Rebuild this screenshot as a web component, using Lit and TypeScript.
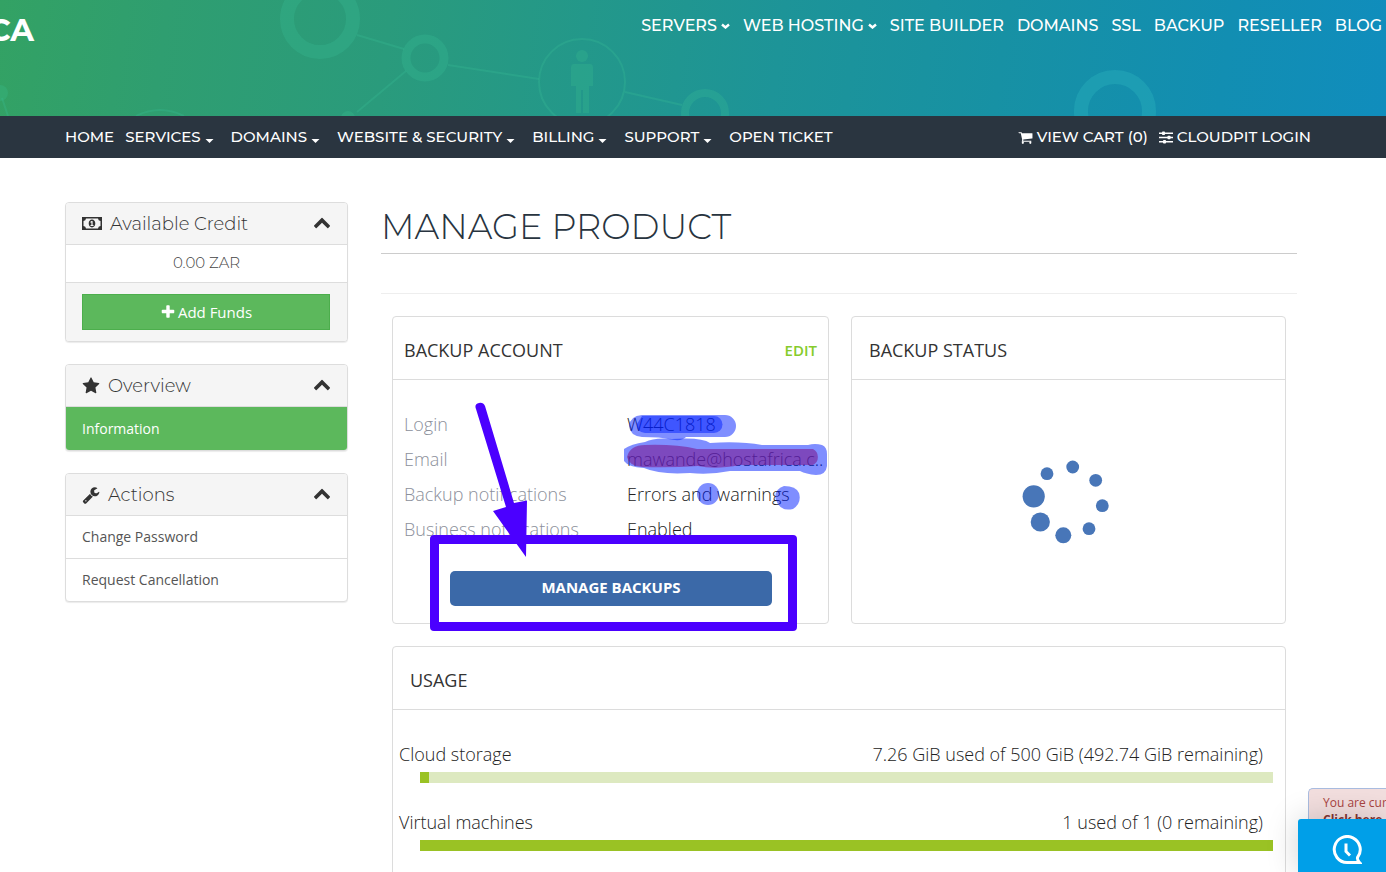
import { LitElement, html, css, svg, nothing } from "lit";
import { customElement, property } from "lit/decorators.js";

const GLYPHS: Record<string, string> = {
  up: "M1683 1331l-166 165q-19 19-45 19t-45-19l-531-531-531 531q-19 19-45 19t-45-19l-166-165q-19-19-19-45.500t19-45.500l742-741q19-19 45-19t45 19l742 741q19 19 19 45.500t-19 45.500z",
  star: "M1728 647q0 22-26 48l-363 354 86 500q1 7 1 20 0 21-10.500 35.500t-30.500 14.500q-19 0-40-12l-449-236-449 236q-22 12-40 12-21 0-31.500-14.500t-10.500-35.500q0-6 2-20l86-500-364-354q-25-27-25-48 0-37 56-46l502-73 225-455q19-41 49-41t49 41l225 455 502 73q56 9 56 46z",
  wrench:
    "M448 1472q0-26-19-45t-45-19-45 19-19 45 19 45 45 19 45-19 19-45zm644-420l-682 682q-37 37-90 37-52 0-91-37l-106-108q-38-36-38-90 0-53 38-91l681-681q39 98 114.500 173.500t173.500 114.500zm634-435q0 39-23 106-47 134-164.500 217.500t-258.500 83.500q-185 0-316.500-131.500t-131.500-316.500 131.500-316.500 316.500-131.500q58 0 121.500 16.500t107.500 46.500q16 11 16 28t-16 28l-293 169v224l193 107q5-3 79-48.500t135.500-81 70.500-35.500q15 0 23.500 10t8.500 25z",
  plus: "M1600 736v192q0 40-28 68t-68 28h-416v416q0 40-28 68t-68 28h-192q-40 0-68-28t-28-68v-416h-416q-40 0-68-28t-28-68v-192q0-40 28-68t68-28h416v-416q0-40 28-68t68-28h192q40 0 68 28t28 68v416h416q40 0 68 28t28 68z",
  cart: "M704 1536q0 52-38 90t-90 38-90-38-38-90 38-90 90-38 90 38 38 90zm896 0q0 52-38 90t-90 38-90-38-38-90 38-90 90-38 90 38 38 90zm128-1088v512q0 24-16.500 42.500t-40.500 21.500l-1044 122q13 60 13 70 0 16-24 64h920q26 0 45 19t19 45-19 45-45 19h-1024q-26 0-45-19t-19-45q0-11 8-31.500t16-36 21.500-40 15.500-29.500l-177-823h-204q-26 0-45-19t-19-45 19-45 45-19h256q16 0 28.500 6.500t19.500 15.500 13 24.500 8 26 5.500 29.500 4.500 26h1201q26 0 45 19t19 45z",
};

const glyph = (name: string, size: number) => html`<svg
  width=${size}
  height=${size}
  viewBox="0 0 1792 1792"
  fill="currentColor"
  aria-hidden="true"
>
  <path d=${GLYPHS[name]}></path>
</svg>`;

const money = html`<svg width="20" height="13" viewBox="0 0 20 13" aria-hidden="true">
  <path
    fill="currentColor"
    fill-rule="evenodd"
    d="M0 0H20V13H0ZM4 1.500A2.700 2.700 0 0 1 1.500 4V9A2.700 2.700 0 0 1 4 11.500H16A2.700 2.700 0 0 1 18.500 9V4A2.700 2.700 0 0 1 16 1.500ZM10 2.600C12 2.600 13.300 4.300 13.300 6.500S12 10.400 10 10.400 6.700 8.700 6.700 6.500 8 2.600 10 2.600ZM9.400 4L8.200 5.100 8.800 5.800 9.400 5.400V8.100H8.500V9H11.500V8.100H10.600V4Z"
  ></path>
</svg>`;

const sliders = html`<svg width="14" height="13" viewBox="0 0 14 13" aria-hidden="true">
  <g fill="currentColor">
    <path d="M0 1.500H14V3H0ZM0 5.700H14V7.200H0ZM0 10H14V11.500H0Z"></path>
    <rect x="3" y="0.500" width="3" height="3.500" rx="0.800"></rect>
    <rect x="8.500" y="4.700" width="3" height="3.500" rx="0.800"></rect>
    <rect x="4" y="9" width="3" height="3.500" rx="0.800"></rect>
  </g>
</svg>`;

@customElement("side-panel")
class SidePanel extends LitElement {
  @property() heading = "";
  @property() icon = "";

  static styles = css`
    :host {
      display: block;
      border: 1px solid #ddd;
      border-radius: 4px;
      background: #fff;
      box-shadow: 0 1px 1px rgba(0, 0, 0, 0.08);
      overflow: hidden;
    }
    .head {
      display: flex;
      align-items: center;
      gap: 8px;
      height: 41px;
      padding: 0 16px;
      border-bottom: 1px solid #ddd;
      background: #f5f5f5;
      color: #333;
    }
    h3 {
      flex: 1;
      margin: 0;
      font: 300 18px/22px Montserrat, Inter, sans-serif;
    }
    button {
      display: flex;
      padding: 0 0 4px;
      border: 0;
      background: none;
      color: #333;
    }
  `;

  render() {
    return html`
      <div class="head">
        ${this.icon === "money" ? money : glyph(this.icon, 18)}
        <h3>${this.heading}</h3>
        <button type="button" aria-label="Toggle ${this.heading}">${glyph("up", 18)}</button>
      </div>
      <slot></slot>
    `;
  }
}

const TOP_LINKS: [string, boolean][] = [
  ["SERVERS", true],
  ["WEB HOSTING", true],
  ["SITE BUILDER", false],
  ["DOMAINS", false],
  ["SSL", false],
  ["BACKUP", false],
  ["RESELLER", false],
  ["BLOG", false],
];

const MAIN_LINKS: [string, boolean][] = [
  ["HOME", false],
  ["SERVICES", true],
  ["DOMAINS", true],
  ["WEBSITE & SECURITY", true],
  ["BILLING", true],
  ["SUPPORT", true],
  ["OPEN TICKET", false],
];

const DETAILS = [
  ["Login", "W44C1818"],
  ["Email", "mawande@hostafrica.c.."],
  ["Backup notifications", "Errors and warnings"],
  ["Business notifications", "Enabled"],
];

const USAGE = [
  { name: "Cloud storage", text: "7.26 GiB used of 500 GiB (492.74 GiB remaining)", percent: 1 },
  { name: "Virtual machines", text: "1 used of 1 (0 remaining)", percent: 100 },
];

const DOTS = [
  [50.7, 12, 6.4],
  [73.7, 25.3, 6.4],
  [80.3, 50.7, 6.4],
  [67, 73.7, 6.4],
  [41.3, 80.3, 8],
  [18.3, 67, 9.600],
  [11.7, 41.3, 11.100],
  [25, 18.7, 6.4],
];

@customElement("app-root")
class AppRoot extends LitElement {
  static styles = css`
    :host {
      display: block;
      height: 100vh;
      overflow: hidden;
      background: #fff;
      color: #333;
      font-family: "Open Sans", sans-serif;
    }
    *,
    *::before {
      box-sizing: border-box;
    }
    a {
      color: inherit;
      text-decoration: none;
    }

    .banner {
      position: relative;
      display: flex;
      align-items: flex-start;
      justify-content: space-between;
      height: 116px;
      padding: 14px 4px 0 0;
      overflow: hidden;
      color: #fff;
      background: linear-gradient(98deg, #33a264 0%, #2f9e70 12%, #2a9b7c 28%, #23988a 42%, #1d9498 56%, #1791a4 72%, #128eb2 88%, #108dbd 100%);
    }
    .art {
      position: absolute;
      inset: 0;
      height: 116px;
    }
    .logo {
      position: relative;
      display: flex;
      justify-content: flex-end;
      width: 34px;
      font: 700 31px/32px Montserrat, Inter, sans-serif;
    }
    .top-nav {
      position: relative;
      display: flex;
      gap: 13px;
      font: 500 16px/24px Montserrat, Inter, sans-serif;
    }
    .link {
      display: flex;
      align-items: center;
      gap: 4px;
      white-space: nowrap;
    }
    .link svg {
      flex: none;
    }

    .bar {
      display: flex;
      align-items: center;
      justify-content: space-between;
      height: 42px;
      padding: 0 75px 0 65px;
      background: #2a3540;
      color: #fff;
      font: 500 15px/24px Montserrat, Inter, sans-serif;
    }
    .group {
      display: flex;
      gap: 11px;
    }
    .bar .caret {
      margin: 8px 6px 0 0;
    }

    .page {
      display: grid;
      grid-template-columns: 283px minmax(0, 1fr);
      gap: 33px;
      align-items: start;
      padding: 44px 89px 0 65px;
    }
    .side {
      display: grid;
      gap: 22px;
    }
    .credit {
      padding: 6px 0 7px;
      border-bottom: 1px solid #ddd;
      color: #444;
      text-align: center;
      font: 300 15px/24px Montserrat, Inter, sans-serif;
    }
    .foot {
      padding: 11px 17px 11px 16px;
      background: #f5f5f5;
    }
    .add {
      display: flex;
      align-items: center;
      justify-content: center;
      gap: 2px;
      width: 100%;
      height: 36px;
      border: 1px solid #4cae4c;
      background: #5cb85c;
      color: #fff;
      font: 500 15px/24px "Open Sans", sans-serif;
    }
    .item {
      display: block;
      height: 43px;
      padding: 10px 16px;
      border-bottom: 1px solid #ddd;
      color: #555;
      font-size: 14px;
      line-height: 22px;
    }
    .item:last-child {
      height: 42px;
      border-bottom: 0;
    }
    .item.active:last-child {
      height: 43px;
      padding-top: 11px;
      background: #5cb85c;
      color: #fff;
      font-weight: 500;
    }

    h1 {
      margin: 0;
      height: 52px;
      border-bottom: 1px solid #ccc;
      color: #28343f;
      font: 300 35px/49px Montserrat, Inter, sans-serif;
    }
    .content {
      margin-top: 39px;
      padding: 22px 11px 0;
      border-top: 1px solid #eee;
      display: grid;
      grid-template-columns: minmax(0, 437fr) minmax(0, 435fr);
      gap: 22px;
    }
    .card {
      position: relative;
      display: flex;
      flex-direction: column;
      border: 1px solid #dcdcdc;
      border-radius: 4px;
    }
    .card-head {
      display: flex;
      align-items: center;
      justify-content: space-between;
      height: 63px;
      padding: 4px 11px 0 17px;
      border-bottom: 1px solid #dcdcdc;
    }
    .account .card-head {
      padding-left: 11px;
    }
    h2 {
      margin: 0;
      font-size: 18px;
      font-weight: 500;
      line-height: 24px;
    }
    .edit {
      color: #86cb2c;
      font-size: 15px;
      font-weight: 600;
      line-height: 24px;
    }
    .details {
      display: grid;
      grid-template-columns: 223px minmax(0, 1fr);
      margin: 0;
      padding: 27px 0 0 11px;
      font-size: 18px;
      font-weight: 350;
      line-height: 35px;
      white-space: nowrap;
    }
    .details dt {
      color: #8c909b;
    }
    .details dd {
      margin: 0;
      color: #222;
    }
    .manage {
      height: 35px;
      margin: 24px 56px 17px 57px;
      padding: 0 0 3px;
      border: 0;
      border-radius: 5px;
      background: #3b69a8;
      color: #fff;
      font: 700 15px/24px "Open Sans", sans-serif;
    }
    .marks {
      position: absolute;
      top: -1px;
      left: -1px;
      width: 437px;
      height: 308px;
      overflow: visible;
      pointer-events: none;
    }
    .loading {
      flex: 1;
      display: flex;
      align-items: center;
      justify-content: center;
      padding: 0 2px 2px 0;
    }
    .usage {
      grid-column: 1 / -1;
      padding-bottom: 40px;
    }
    .rows {
      display: grid;
      gap: 27px;
      padding: 32px 12px 0 6px;
      color: #222;
      font-size: 18px;
      font-weight: 350;
      line-height: 24px;
    }
    .line {
      display: flex;
      justify-content: space-between;
      padding-right: 10px;
    }
    .track {
      height: 11px;
      margin: 6px 0 0 21px;
      background: #dde9c0;
    }
    .fill {
      height: 11px;
      background: #9ac224;
    }

    .notice {
      position: fixed;
      right: 0;
      bottom: 0;
      width: 78px;
      height: 84px;
      padding: 5px 0 0 14px;
      overflow: hidden;
      border: 1px solid #a9bce0;
      border-right: 0;
      border-radius: 5px 0 0 0;
      background: #f2dede;
      color: #a94442;
      font-size: 12px;
      line-height: 17px;
      white-space: nowrap;
    }
    .notice a {
      display: block;
      color: #843534;
      font-weight: 700;
    }
    .chat {
      position: fixed;
      right: 0;
      bottom: 0;
      display: flex;
      align-items: center;
      justify-content: center;
      width: 88px;
      height: 53px;
      padding: 8px 0 0 10px;
      border: 0;
      border-radius: 3px 0 0 0;
      background: #009fe8;
      box-shadow: 0 0 32px rgba(0, 0, 0, 0.18);
    }
  `;

  private navLink([text, menu]: [string, boolean], rounded: boolean) {
    return html`<a class="link" href="#"
      >${text}${menu
        ? html`<svg class="caret" width="9" height="6" viewBox="0 0 9 6" aria-hidden="true">
            ${rounded
              ? svg`<path d="M1 1.500L4.500 4.500L8 1.500" fill="none" stroke="#fff" stroke-width="2.400"></path>`
              : svg`<path d="M0.500 1H8.500L4.500 5Z" fill="#fff"></path>`}
          </svg>`
        : nothing}</a
    >`;
  }

  private banner() {
    return html`<header class="banner">
      <svg class="art" width="1386" height="116" viewBox="0 0 1386 116" aria-hidden="true">
        <g fill="none" stroke="#38bd96" stroke-opacity="0.28">
          <circle cx="320" cy="19" r="33" stroke-width="14"></circle>
          <circle cx="425" cy="58" r="19" stroke-width="9"></circle>
          <circle cx="582" cy="82" r="43" stroke-width="2"></circle>
          <circle cx="705" cy="113" r="20" stroke-width="8"></circle>
          <path stroke-width="2" d="M357 35L404 49M406 71L357 112M448 65L539 79M625 92L682 105M2 98L8 116M136 116Q160 104 184 116"></path>
        </g>
        <circle cx="1115" cy="111" r="34" fill="none" stroke="#2fb8c0" stroke-opacity="0.35" stroke-width="14"></circle>
        <g fill="#38bd90" fill-opacity="0.28">
          <circle cx="0" cy="93" r="8"></circle>
          <circle cx="348" cy="118" r="7"></circle>
          <circle cx="582" cy="56" r="6"></circle>
          <path d="M574 64H590Q593 64 593 68V86H589V113H583V90H581V113H576V86H571V68Q571 64 574 64Z"></path>
        </g>
      </svg>
      <a class="logo" href="#">CA</a>
      <nav class="top-nav" aria-label="Site">${TOP_LINKS.map((l) => this.navLink(l, true))}</nav>
    </header>`;
  }

  private marks() {
    return html`<svg class="marks" viewBox="392 316 437 308" aria-hidden="true">
      <g fill="#001eff" fill-opacity="0.5">
        <path d="M642 415H725A11 11 0 0 1 725 437H686Q682 442 668 439Q662 437 642 437Q630 436 629 426Q630 416 642 415Z"></path>
        <path d="M642 416H714A8.500 8.500 0 0 1 714 433H645Q636 432 637 424Z"></path>
        <path d="M624 449Q631 444 645 442Q655 437 672 439Q702 437 710 443Q740 441 762 445H808Q815 443 822 445Q827 447 827 454V466Q826 475 816 475Q806 474 800 471H730Q710 475 690 473Q660 475 644 468Q628 467 624 461Z"></path>
        <circle cx="708" cy="494" r="11"></circle>
        <path d="M784 486Q796 486 799 493Q802 503 793 509Q780 512 776 500Q773 490 784 486Z"></path>
      </g>
      <path fill="#7d1e96" fill-opacity="0.620" d="M627 457Q630 445 645 445Q675 444 697 449H813A9 9 0 0 1 813 465H740Q715 470 698 466Q670 468 642 467Q629 466 627 457Z"></path>
      <g fill="#4b00ff">
        <path d="M476 409Q474 404 479 403Q483 402 485 406L514 503L527 500.500L526 557L493 511L506 507Z"></path>
        <path fill-rule="evenodd" d="M434 535H793Q797 535 797 539V627Q797 631 793 631H434Q430 631 430 627V539Q430 535 434 535ZM439 544V622H788V544Z"></path>
      </g>
    </svg>`;
  }

  render() {
    return html`
      ${this.banner()}
      <nav class="bar" aria-label="Client area">
        <div class="group">${MAIN_LINKS.map((l) => this.navLink(l, false))}</div>
        <div class="group">
          <a class="link" href="#">${glyph("cart", 15)}VIEW CART (0)</a>
          <a class="link" href="#">${sliders}CLOUDPIT LOGIN</a>
        </div>
      </nav>

      <div class="page">
        <aside class="side">
          <side-panel heading="Available Credit" icon="money">
            <div class="credit">0.00 ZAR</div>
            <div class="foot">
              <button class="add" type="button">${glyph("plus", 16)}Add Funds</button>
            </div>
          </side-panel>
          <side-panel heading="Overview" icon="star">
            <a class="item active" href="#">Information</a>
          </side-panel>
          <side-panel heading="Actions" icon="wrench">
            <a class="item" href="#">Change Password</a>
            <a class="item" href="#">Request Cancellation</a>
          </side-panel>
        </aside>

        <main>
          <h1>MANAGE PRODUCT</h1>
          <div class="content">
            <section class="card account">
              <div class="card-head">
                <h2>BACKUP ACCOUNT</h2>
                <a class="edit" href="#">EDIT</a>
              </div>
              <dl class="details">
                ${DETAILS.map(([k, v]) => html`<dt>${k}</dt><dd>${v}</dd>`)}
              </dl>
              <button class="manage" type="button">MANAGE BACKUPS</button>
              ${this.marks()}
            </section>
            <section class="card">
              <div class="card-head"><h2>BACKUP STATUS</h2></div>
              <div class="loading">
                <svg width="92" height="92" viewBox="0 0 92 92" fill="#4876b8" role="img" aria-label="Loading">
                  ${DOTS.map(([x, y, r]) => svg`<circle cx=${x} cy=${y} r=${r}></circle>`)}
                </svg>
              </div>
            </section>
            <section class="card usage">
              <div class="card-head"><h2>USAGE</h2></div>
              <div class="rows">
                ${USAGE.map(
                  (u) => html`<div>
                    <div class="line"><span>${u.name}</span><span>${u.text}</span></div>
                    <div class="track" role="progressbar" aria-label=${u.name} aria-valuenow=${u.percent}>
                      <div class="fill" style="width:${u.percent}%"></div>
                    </div>
                  </div>`
                )}
              </div>
            </section>
          </div>
        </main>
      </div>

      <div class="notice">You are cur<a href="#">Click here</a></div>
      <button class="chat" type="button" aria-label="Chat">
        <svg width="30" height="30" viewBox="0 0 30 30" fill="none" stroke="#fff" stroke-width="3" aria-hidden="true">
          <path d="M27.500 27.500H15A13 13 0 1 1 25.500 22.500Q25 25 27.500 27.500Z"></path>
          <path d="M14 8.500V16.500L18 20.500"></path>
        </svg>
      </button>
    `;
  }
}
